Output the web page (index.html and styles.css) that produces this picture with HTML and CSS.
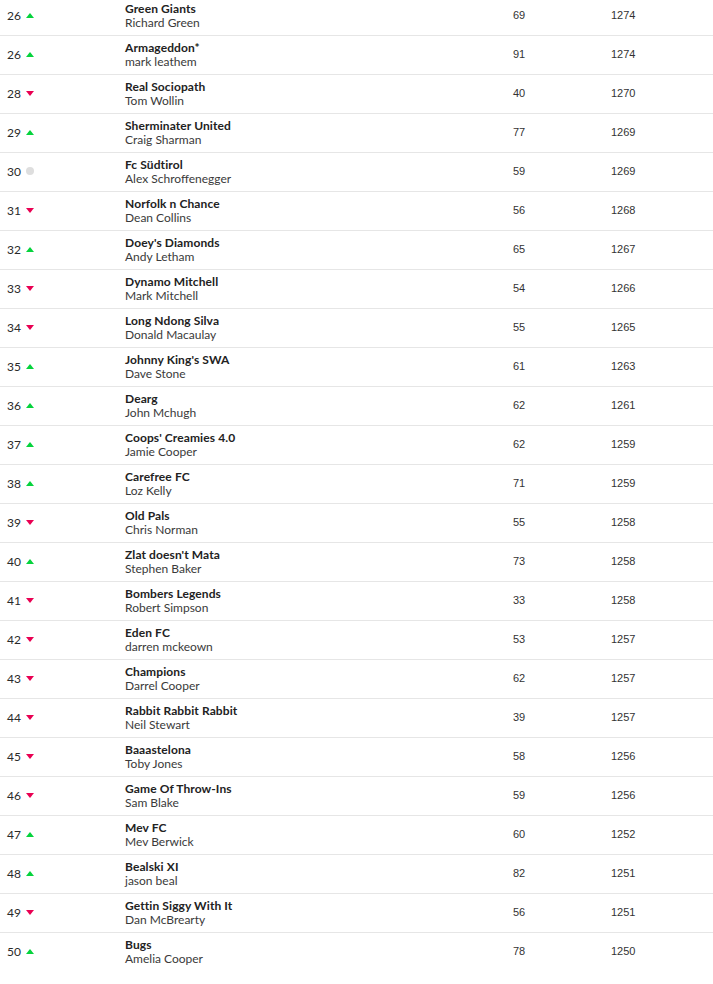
FILE: index.html
```html
<!DOCTYPE html>
<html lang="en">
<head>
<meta charset="utf-8">
<title>League standings</title>
<link rel="stylesheet" href="styles.css">
</head>
<body>
<div class="standings">
  <div class="row"><div class="rank">26<span class="mv up"></span></div><div class="team"><strong>Green Giants</strong><span>Richard Green</span></div><div class="gw">69</div><div class="tot">1274</div></div>
  <div class="row"><div class="rank">26<span class="mv up"></span></div><div class="team"><strong>Armageddon*</strong><span>mark leathem</span></div><div class="gw">91</div><div class="tot">1274</div></div>
  <div class="row"><div class="rank">28<span class="mv down"></span></div><div class="team"><strong>Real Sociopath</strong><span>Tom Wollin</span></div><div class="gw">40</div><div class="tot">1270</div></div>
  <div class="row"><div class="rank">29<span class="mv up"></span></div><div class="team"><strong>Sherminater United</strong><span>Craig Sharman</span></div><div class="gw">77</div><div class="tot">1269</div></div>
  <div class="row"><div class="rank">30<span class="mv same"></span></div><div class="team"><strong>Fc Südtirol</strong><span>Alex Schroffenegger</span></div><div class="gw">59</div><div class="tot">1269</div></div>
  <div class="row"><div class="rank">31<span class="mv down"></span></div><div class="team"><strong>Norfolk n Chance</strong><span>Dean Collins</span></div><div class="gw">56</div><div class="tot">1268</div></div>
  <div class="row"><div class="rank">32<span class="mv up"></span></div><div class="team"><strong>Doey's Diamonds</strong><span>Andy Letham</span></div><div class="gw">65</div><div class="tot">1267</div></div>
  <div class="row"><div class="rank">33<span class="mv down"></span></div><div class="team"><strong>Dynamo Mitchell</strong><span>Mark Mitchell</span></div><div class="gw">54</div><div class="tot">1266</div></div>
  <div class="row"><div class="rank">34<span class="mv down"></span></div><div class="team"><strong>Long Ndong Silva</strong><span>Donald Macaulay</span></div><div class="gw">55</div><div class="tot">1265</div></div>
  <div class="row"><div class="rank">35<span class="mv up"></span></div><div class="team"><strong>Johnny King's SWA</strong><span>Dave Stone</span></div><div class="gw">61</div><div class="tot">1263</div></div>
  <div class="row"><div class="rank">36<span class="mv up"></span></div><div class="team"><strong>Dearg</strong><span>John Mchugh</span></div><div class="gw">62</div><div class="tot">1261</div></div>
  <div class="row"><div class="rank">37<span class="mv up"></span></div><div class="team"><strong>Coops' Creamies 4.0</strong><span>Jamie Cooper</span></div><div class="gw">62</div><div class="tot">1259</div></div>
  <div class="row"><div class="rank">38<span class="mv up"></span></div><div class="team"><strong>Carefree FC</strong><span>Loz Kelly</span></div><div class="gw">71</div><div class="tot">1259</div></div>
  <div class="row"><div class="rank">39<span class="mv down"></span></div><div class="team"><strong>Old Pals</strong><span>Chris Norman</span></div><div class="gw">55</div><div class="tot">1258</div></div>
  <div class="row"><div class="rank">40<span class="mv up"></span></div><div class="team"><strong>Zlat doesn't Mata</strong><span>Stephen Baker</span></div><div class="gw">73</div><div class="tot">1258</div></div>
  <div class="row"><div class="rank">41<span class="mv down"></span></div><div class="team"><strong>Bombers Legends</strong><span>Robert Simpson</span></div><div class="gw">33</div><div class="tot">1258</div></div>
  <div class="row"><div class="rank">42<span class="mv down"></span></div><div class="team"><strong>Eden FC</strong><span>darren mckeown</span></div><div class="gw">53</div><div class="tot">1257</div></div>
  <div class="row"><div class="rank">43<span class="mv down"></span></div><div class="team"><strong>Champions</strong><span>Darrel Cooper</span></div><div class="gw">62</div><div class="tot">1257</div></div>
  <div class="row"><div class="rank">44<span class="mv down"></span></div><div class="team"><strong>Rabbit Rabbit Rabbit</strong><span>Neil Stewart</span></div><div class="gw">39</div><div class="tot">1257</div></div>
  <div class="row"><div class="rank">45<span class="mv down"></span></div><div class="team"><strong>Baaastelona</strong><span>Toby Jones</span></div><div class="gw">58</div><div class="tot">1256</div></div>
  <div class="row"><div class="rank">46<span class="mv down"></span></div><div class="team"><strong>Game Of Throw-Ins</strong><span>Sam Blake</span></div><div class="gw">59</div><div class="tot">1256</div></div>
  <div class="row"><div class="rank">47<span class="mv up"></span></div><div class="team"><strong>Mev FC</strong><span>Mev Berwick</span></div><div class="gw">60</div><div class="tot">1252</div></div>
  <div class="row"><div class="rank">48<span class="mv up"></span></div><div class="team"><strong>Bealski XI</strong><span>jason beal</span></div><div class="gw">82</div><div class="tot">1251</div></div>
  <div class="row"><div class="rank">49<span class="mv down"></span></div><div class="team"><strong>Gettin Siggy With It</strong><span>Dan McBrearty</span></div><div class="gw">56</div><div class="tot">1251</div></div>
  <div class="row"><div class="rank">50<span class="mv up"></span></div><div class="team"><strong>Bugs</strong><span>Amelia Cooper</span></div><div class="gw">78</div><div class="tot">1250</div></div>
</div>
</body>
</html>
```
FILE: styles.css
```css
html, body {
  margin: 0;
  padding: 0;
  background: #fff;
}
body {
  font-family: Lato, "Open Sans", sans-serif;
  color: #2a2a2a;
  font-size: 12px;
}
.standings {
  margin-top: -4px;
}
.row {
  display: grid;
  grid-template-columns: 125px 388px 98px 1fr;
  align-items: center;
  height: 38px;
  border-top: 1px solid #e6e6e6;
}
.rank {
  padding-left: 7px;
  padding-bottom: 2px;
  display: flex;
  align-items: center;
  font-size: 12px;
  color: #2a2a2a;
}
.mv {
  margin-left: 5px;
  display: inline-block;
}
.mv.up {
  width: 0;
  height: 0;
  border-left: 4px solid transparent;
  border-right: 4px solid transparent;
  border-bottom: 5px solid #05d33c;
}
.mv.down {
  width: 0;
  height: 0;
  border-left: 4px solid transparent;
  border-right: 4px solid transparent;
  border-top: 5px solid #e90052;
}
.mv.same {
  width: 8px;
  height: 8px;
  border-radius: 50%;
  background: #dedede;
}
.team {
  display: flex;
  flex-direction: column;
  line-height: 14px;
}
.team strong {
  font-weight: 700;
  font-size: 12px;
  color: #222;
  letter-spacing: 0.1px;
}
.team span {
  font-size: 12px;
  color: #3a3a3a;
}
.gw, .tot {
  font-family: "Liberation Sans", Arial, sans-serif;
  font-size: 11px;
  color: #333;
  padding-bottom: 2px;
}
```
